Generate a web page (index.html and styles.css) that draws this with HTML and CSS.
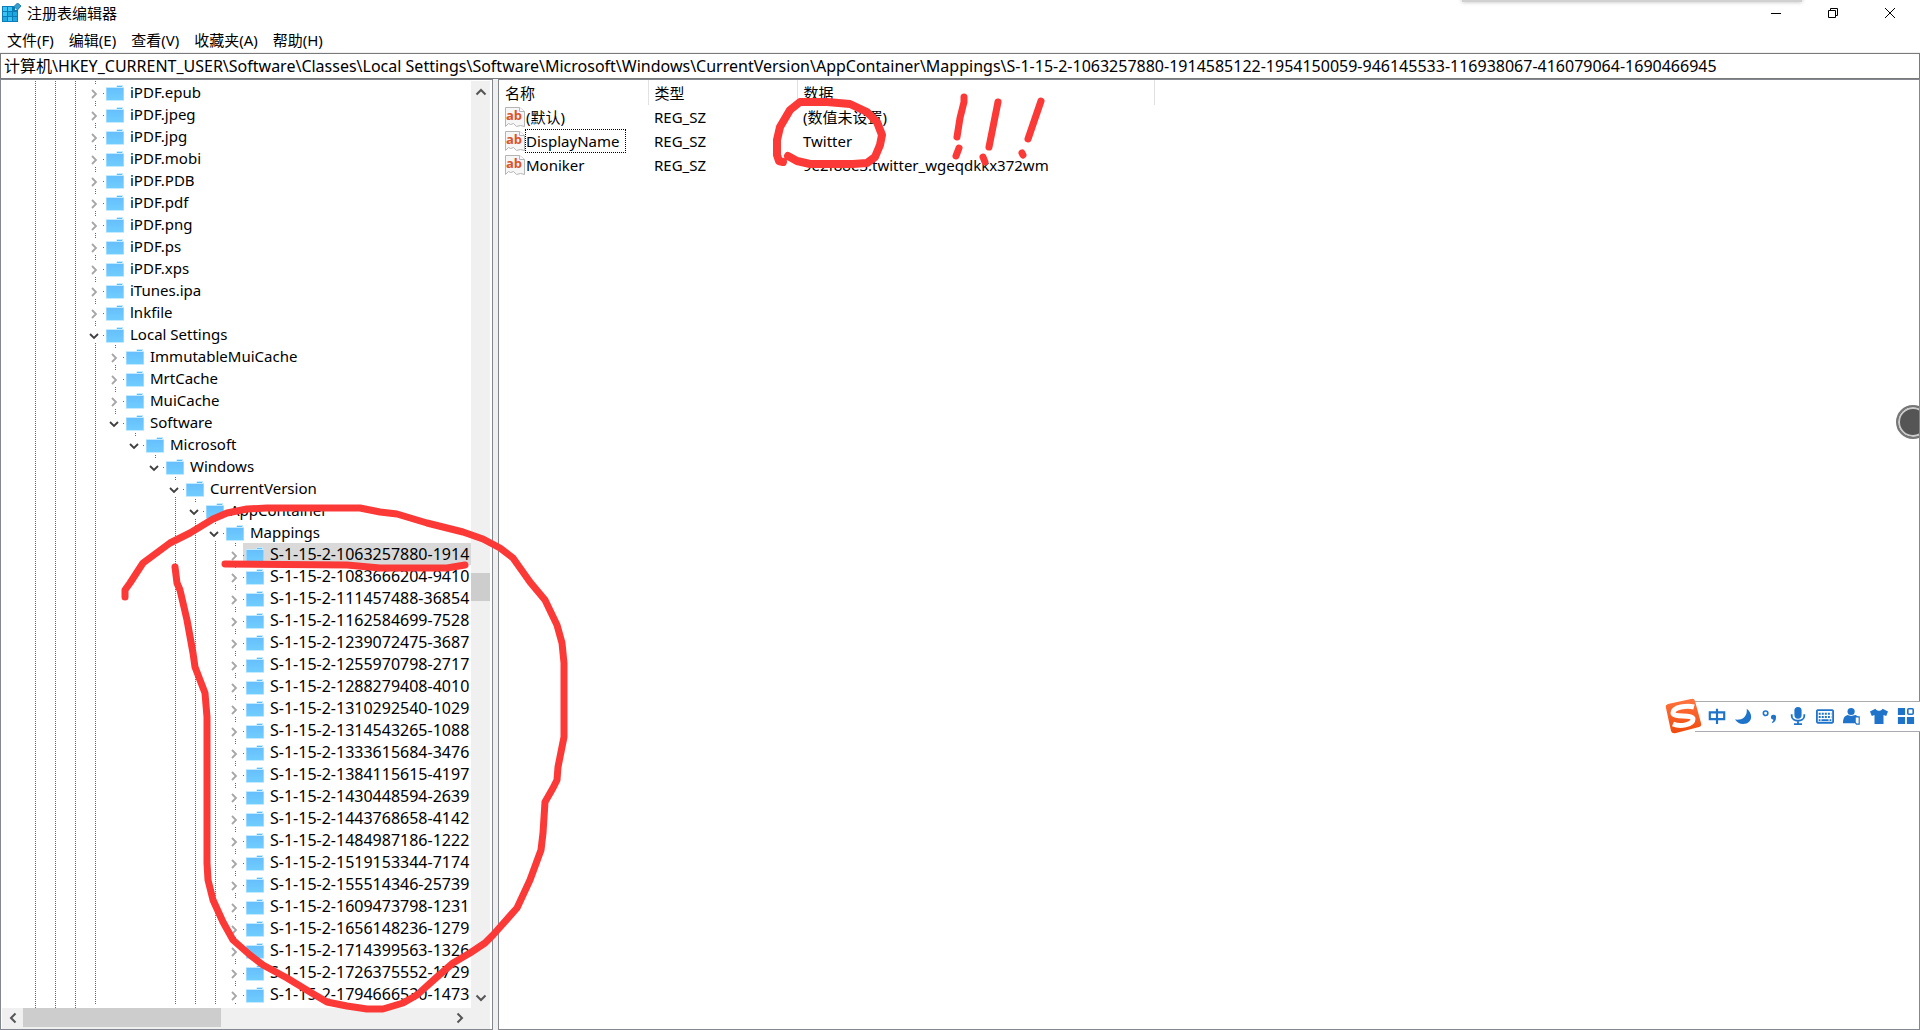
FILE: index.html
```html
<!DOCTYPE html>
<html lang="zh-CN">
<head>
<meta charset="utf-8">
<title>注册表编辑器</title>
<link rel="stylesheet" href="styles.css">
</head>
<body>
<svg class="defs" aria-hidden="true">
  <defs>
    <linearGradient id="folder-fill" x1="0" y1="0" x2="0" y2="1"><stop offset="0" stop-color="#66bffc"/><stop offset="1" stop-color="#70cdff"/></linearGradient>
    <symbol id="folder" viewBox="0 0 18 16"><path d="M0 2h10l1-2h6v2h1v14H0z" fill="#c4eaff"/><path d="M11 1h5v1h-5z" fill="#5fc0f5"/><path d="M.5 3h17v12H.5z" fill="url(#folder-fill)"/></symbol>
    <symbol id="closed" viewBox="0 0 12 12"><path d="M4 2l4 4-4 4" fill="none" stroke="#a6a6a6" stroke-width="1.800"/></symbol>
    <symbol id="open" viewBox="0 0 12 12"><path d="M2 4l4 4 4-4" fill="none" stroke="#404040" stroke-width="1.800"/></symbol>
    <symbol id="arrow" viewBox="0 0 12 12"><path d="M1.500 8.500L6 4l4.500 4.500" fill="none" stroke="#555" stroke-width="2"/></symbol>
    <symbol id="string" viewBox="0 0 20 20"><path d="M.5 .5h14l5 4v15l-4-1-4 1-3-3-3 1-2-1-3 3z" fill="#f6f6f6" stroke="#b5b5b5"/><path d="M14.500 .5v4h5" fill="#fff" stroke="#b5b5b5"/><text x="1" y="13" class="ab">ab</text></symbol>
  </defs>
</svg>
<div class="window">
  <header class="titlebar">
    <svg class="app-icon" width="20" height="20" viewBox="0 0 20 20" aria-hidden="true"><path d="M0 3h13v4h3v12H0z" fill="#0b7db8"/><path d="M1 4h4v4H1zM6 4h4v4H6zM1 9h4v4H1zM6 14h4v4H6z" fill="#3cc3f2"/><path d="M6 9h4v4H6zM11 9h4v4h-4zM1 14h4v4H1zM11 14h4v4h-4z" fill="#1ea7e0"/><path d="M15.500 0l3.500 3-3.500 4L12 3.500z" fill="#3a9fd0" stroke="#1c7fb0"/></svg>
    <h1>注册表编辑器</h1>
    <div class="controls">
      <button aria-label="最小化"><svg width="12" height="12"><path d="M1 6.500h10" stroke="#000"/></svg></button>
      <button aria-label="还原"><svg width="12" height="12"><path d="M1.500 3.500h7v7h-7zM3.500 3V1.500h7v7H9" fill="none" stroke="#000"/></svg></button>
      <button aria-label="关闭"><svg width="12" height="12"><path d="M1 1l10 10M11 1L1 11" stroke="#000"/></svg></button>
    </div>
  </header>
  <nav class="menu">
    <button>文件(F)</button><button>编辑(E)</button><button>查看(V)</button><button>收藏夹(A)</button><button>帮助(H)</button>
  </nav>
  <input class="address" aria-label="地址" value="计算机\HKEY_CURRENT_USER\Software\Classes\Local Settings\Software\Microsoft\Windows\CurrentVersion\AppContainer\Mappings\S-1-15-2-1063257880-1914585122-1954150059-946145533-116938067-416079064-1690466945">
  <main class="panes">
    <section class="tree-pane">
      <div class="tree-view">
        <div class="branch"><div class="branch"><div class="branch">
        <ul id="tree" class="tree"></ul>
        </div></div></div>
      </div>
      <div class="vscroll">
        <button aria-label="向上滚动"><svg width="16" height="12"><use href="#arrow" width="16" height="12"/></svg></button>
        <span class="thumb"></span>
        <button class="down" aria-label="向下滚动"><svg width="16" height="12"><use href="#arrow" width="16" height="12"/></svg></button>
      </div>
      <div class="hscroll">
        <button class="left" aria-label="向左滚动"><svg width="16" height="12"><use href="#arrow" width="16" height="12"/></svg></button>
        <span class="thumb"></span>
        <button class="right" aria-label="向右滚动"><svg width="16" height="12"><use href="#arrow" width="16" height="12"/></svg></button>
      </div>
    </section>
    <section class="value-pane">
      <table class="values">
        <colgroup><col class="c-name"><col class="c-type"><col class="c-data"><col></colgroup>
        <thead><tr><th>名称</th><th>类型</th><th>数据</th><td></td></tr></thead>
        <tbody>
          <tr><td><div class="name"><svg width="20" height="20"><use href="#string"/></svg><span>(默认)</span></div></td><td>REG_SZ</td><td>(数值未设置)</td></tr>
          <tr><td><div class="name"><svg width="20" height="20"><use href="#string"/></svg><span class="focused">DisplayName</span></div></td><td>REG_SZ</td><td>Twitter</td></tr>
          <tr><td><div class="name"><svg width="20" height="20"><use href="#string"/></svg><span>Moniker</span></div></td><td>REG_SZ</td><td>9e2f88e3.twitter_wgeqdkkx372wm</td></tr>
        </tbody>
      </table>
    </section>
  </main>
</div>
<div class="edge-shadow"></div>
<div class="assist"></div>
<div class="ime">
  <svg class="ime-logo" width="38" height="36" viewBox="0 0 38 36" aria-hidden="true"><defs><linearGradient id="s" x1="0" y1="0" x2="0" y2="1"><stop offset="0" stop-color="#ff7440"/><stop offset="1" stop-color="#f04a0c"/></linearGradient></defs><path d="M3 6L26 1q3-1 4 2l6 22q1 3-2 4L11 35q-4 1-5-2L1 10q-1-3 2-4z" fill="url(#s)"/><path d="M29 9C22 7 8 9 8 15c0 5 20 1 20 6 0 6-13 8-20 5" fill="none" stroke="#fff" stroke-width="5"/></svg>
  <button aria-label="中文"><svg viewBox="0 0 20 20"><path d="M2 6h16v7.500H2zM10 2v17" fill="none" stroke="#1f74c9" stroke-width="2.400"/></svg></button>
  <button aria-label="半角"><svg viewBox="0 0 20 20"><path d="M13 2c8 6 6 17-4 17-4 0-7-2-9-5 8 1 14-3 13-12z"/></svg></button>
  <button aria-label="标点"><svg viewBox="0 0 20 20"><circle cx="4" cy="7" r="2.500" fill="none" stroke="#1f74c9" stroke-width="1.800"/><path d="M10 11.500a2.800 2.800 0 1 1 5.500 .5c0 4-2 5-4.500 6v-1c1-1 2-2 1.500-3-1.500 0-2.500-1-2.500-2.500z"/></svg></button>
  <button aria-label="语音"><svg viewBox="0 0 20 20"><rect x="6" y="0" width="8" height="13" rx="4"/><path d="M3 8v2c0 7 14 7 14 0V8M10 15v4M5.500 19h9" fill="none" stroke="#1f74c9" stroke-width="2"/></svg></button>
  <button aria-label="软键盘"><svg viewBox="0 0 20 20"><rect x="1" y="3.500" width="18" height="14" rx="1" fill="#fff" stroke="#1f74c9" stroke-width="2"/><path d="M3 7.500h14M3 11h14" stroke="#1f74c9" stroke-width="2.200" stroke-dasharray="2.200 1.200"/><path d="M3 14.500h2M6 14.500h8M15 14.500h2" stroke="#1f74c9" stroke-width="2"/></svg></button>
  <button aria-label="账户"><svg viewBox="0 0 20 20"><circle cx="9" cy="5" r="4"/><path d="M0 18c0-6 2-8 5-9l4 1 5-1c3 1 4 4 4 9z"/><path d="M13.500 11h4.500v8h-3l-1.500-2z" fill="#fff" stroke="#1f74c9" stroke-width="1.300"/></svg></button>
  <button aria-label="皮肤"><svg viewBox="0 0 20 20"><path d="M6 2c2 3 6 3 8 0l6 3-2 5-3-1v10H5V9l-3 1-2-5z"/></svg></button>
  <button aria-label="工具箱"><svg viewBox="0 0 20 20"><path d="M1 1h8v8H1zM1 11h8v8H1zM11 11h8v8h-8z"/><rect x="12" y="2" width="6" height="6" rx="1" fill="#fff" stroke="#1f74c9" stroke-width="1.800"/></svg></button>
</div>
<svg class="ink" width="1920" height="1030" viewBox="0 0 1920 1030" aria-hidden="true">
  <path d="M125 597V590L130 583 143 563 170 543 190 533 213 519 227 513 247 509 267 508H360L380 512 397 514 427 523 447 528 463 532 483 539 500 548 513 558 530 582 545 600 557 625 562 643 564 663V737L560 757 558 767 557 780 553 788 545 802 543 833 541 850 530 880 517 908 493 935 485 943 470 953 453 963 437 977 417 995 403 1003 383 1009H367L347 1006 327 1002 310 992 287 978 263 965 250 955 233 940 223 922 213 900 208 880 207 863V717L205 693 195 667 193 653 187 620 180 590 177 583 175 567"/>
  <path d="M225 564L347 565 380 568H447L465 565"/>
  <path class="bold" d="M788 156L797 161 810 164H853L867 163 875 157 880 145 882 135 877 122 867 112 850 104 827 102H800L790 110 780 127 777 140V155L779 161 783 162"/>
  <path d="M964 97V102L960 118 957 137M959 148L956 156M998 102L989 147M983 157L985 162M1041 101L1028 139M1022 153L1023 155"/>
</svg>
<script src="tree.js"></script>
</body>
</html>
```
FILE: styles.css
```css
* { box-sizing: border-box; }

body {
  margin: 0;
  background: #fff;
  color: #000;
  font: 15px/22px "Noto Sans", "Noto Sans CJK SC", sans-serif;
  overflow: hidden;
}

button, input {
  margin: 0;
  padding: 0;
  border: 0;
  background: none;
  color: inherit;
  font: inherit;
}

.defs { position: absolute; width: 0; height: 0; }

.window { display: flex; flex-direction: column; height: 100vh; }

.titlebar { display: flex; align-items: center; height: 28px; padding: 0 2px 2px; }
.titlebar h1 { margin: 0 auto 0 5px; font-size: 15px; font-weight: 400; }
.controls { display: flex; }
.controls button { width: 57px; height: 26px; }
.controls svg { display: block; margin: auto; }

.menu { display: flex; gap: 15px; height: 24px; margin-bottom: 1px; padding: 0 7px; }

.address {
  height: 26px;
  padding: 0 3px 2px;
  border: 1px solid #7a7a7a;
  outline: 1px solid #eef0f2;
  font-size: 16px;
}

.panes { display: flex; flex: 1; gap: 5px; min-height: 0; background: #f0f0f0; }
.tree-pane, .value-pane { border: 1px solid #828790; background: #fff; }

.tree-pane {
  display: grid;
  grid-template: minmax(0, 1fr) 21px / minmax(0, 1fr) 19px;
  width: 493px;
  padding: 1px 2px 0 1px;
}

.tree-view { overflow: hidden; padding-left: 23px; }
.branch, .tree ul { padding-left: 20px; }
.branch { height: 100%; }
.tree, .tree ul { margin: 0; list-style: none; }
.tree { height: 100%; padding: 0; }

.branch, .tree li.more {
  background: repeating-linear-gradient(#666 0 1px, transparent 1px 2px) 10px 0 / 1px 100% no-repeat;
}
.tree li.last { background: repeating-linear-gradient(#666 0 1px, transparent 1px 2px) 10px 0 / 1px 3px no-repeat; }

.row { display: flex; height: 22px; white-space: nowrap; }
.row button { width: 18px; height: 16px; margin-top: 4px; padding: 1px 3px 0; background: #fff; }
.row button svg { display: block; }
.label {
  display: flex;
  flex: 1;
  gap: 6px;
  padding-left: 3px;
  background: linear-gradient(#666, #666) 0 12px / 1px 1px no-repeat;
}
.label svg { flex: none; margin-top: 4px; }
.label.sid { font-size: 16px; }
.label.selected { background-color: #d9d9d9; }

.vscroll, .hscroll { display: flex; background: #f0f0f0; }
.vscroll { flex-direction: column; }
.vscroll button { height: 21px; }
.hscroll { grid-column: 1 / 3; padding: 0 20px 2px 0; }
.hscroll button { width: 21px; }
.vscroll svg, .hscroll svg { display: block; margin: auto; }
.thumb { background: #cdcdcd; }
.vscroll .thumb { height: 28px; margin: 471px 0 auto; }
.hscroll .thumb { width: 198px; margin-right: auto; }
.down svg { transform: rotate(180deg); }
.left svg { transform: rotate(270deg); }
.right svg { transform: rotate(90deg); }

.value-pane { flex: 1; min-width: 0; }
.values { width: 100%; table-layout: fixed; border-collapse: collapse; }
.c-name, .c-type { width: 149px; }
.c-data { width: 357px; }
.values tr { height: 24px; }
.values td, .values th { padding: 0 0 0 6px; font-weight: 400; text-align: left; white-space: nowrap; }
.values th { height: 25px; border-right: 1px solid #e2e2e2; }
.name { display: flex; align-items: center; }
.name span { padding: 0 6px 0 0; border: 1px solid transparent; }
.name .focused { border: 1px dotted #000; }
.ab { font: bold 13px "Open Sans", sans-serif; fill: #d9532c; }

.edge-shadow {
  position: absolute;
  top: -8px;
  right: 118px;
  width: 340px;
  height: 10px;
  background: #d0d0d0;
  box-shadow: 0 0 4px #bbb;
}

.assist {
  position: absolute;
  top: 405px;
  right: -10px;
  width: 34px;
  height: 34px;
  border: 2px solid #777;
  border-radius: 50%;
  background: #555;
  box-shadow: inset 0 0 0 2px #ccc;
  clip-path: inset(0 11px 0 0);
}

.ime {
  position: absolute;
  top: 701px;
  right: 0;
  display: flex;
  align-items: center;
  height: 31px;
  padding: 0 1px 2px 0;
  border: solid #a9abb0;
  border-width: 1px 0;
  background: #fff;
}
.ime-logo { margin: 0 0 0 -30px; }
.ime button { width: 27px; height: 27px; }
.ime button svg { display: block; width: 18px; height: 18px; margin: auto; fill: #1f74c9; }

.ink {
  position: absolute;
  top: 0;
  left: 0;
  fill: none;
  stroke: #fb3a38;
  stroke-width: 7;
  stroke-linecap: round;
  stroke-linejoin: round;
  pointer-events: none;
}
.ink .bold { stroke-width: 8; }
```
FILE: tree.js
```js
const sids = [
  '1063257880-1914', '1083666204-9410', '111457488-36854', '1162584699-7528',
  '1239072475-3687', '1255970798-2717', '1288279408-4010', '1310292540-1029',
  '1314543265-1088', '1333615684-3476', '1384115615-4197', '1430448594-2639',
  '1443768658-4142', '1484987186-1222', '1519153344-7174', '155514346-25739',
  '1609473798-1231', '1656148236-1279', '1714399563-1326', '1726375552-1729',
  '1794666530-1473'
].map((id, i) => ({ name: 'S-1-15-2-' + id, more: true, style: i === 0 ? 'sid selected' : 'sid' }));

const keys = [
  'iPDF.epub', 'iPDF.jpeg', 'iPDF.jpg', 'iPDF.mobi', 'iPDF.PDB', 'iPDF.pdf',
  'iPDF.png', 'iPDF.ps', 'iPDF.xps', 'iTunes.ipa', 'lnkfile',
  { name: 'Local Settings', more: true, children: [
    'ImmutableMuiCache', 'MrtCache', 'MuiCache',
    { name: 'Software', children: [
      { name: 'Microsoft', children: [
        { name: 'Windows', children: [
          { name: 'CurrentVersion', more: true, children: [
            { name: 'AppContainer', more: true, children: [
              { name: 'Mappings', more: true, children: sids }
            ] }
          ] }
        ] }
      ] }
    ] }
  ] }
];

function render(list) {
  return list.map(item => {
    const key = typeof item === 'string' ? { name: item, more: true } : item;
    const icon = key.children ? 'open' : 'closed';
    return `<li class="${key.more ? 'more' : 'last'}"><div class="row">` +
      `<button aria-label="${key.children ? '折叠' : '展开'} ${key.name}"><svg width="12" height="12"><use href="#${icon}"/></svg></button>` +
      `<span class="label ${key.style || ''}"><svg width="18" height="16"><use href="#folder"/></svg>${key.name}</span></div>` +
      (key.children ? `<ul>${render(key.children)}</ul>` : '') + '</li>';
  }).join('');
}

document.getElementById('tree').innerHTML = render(keys);
```
